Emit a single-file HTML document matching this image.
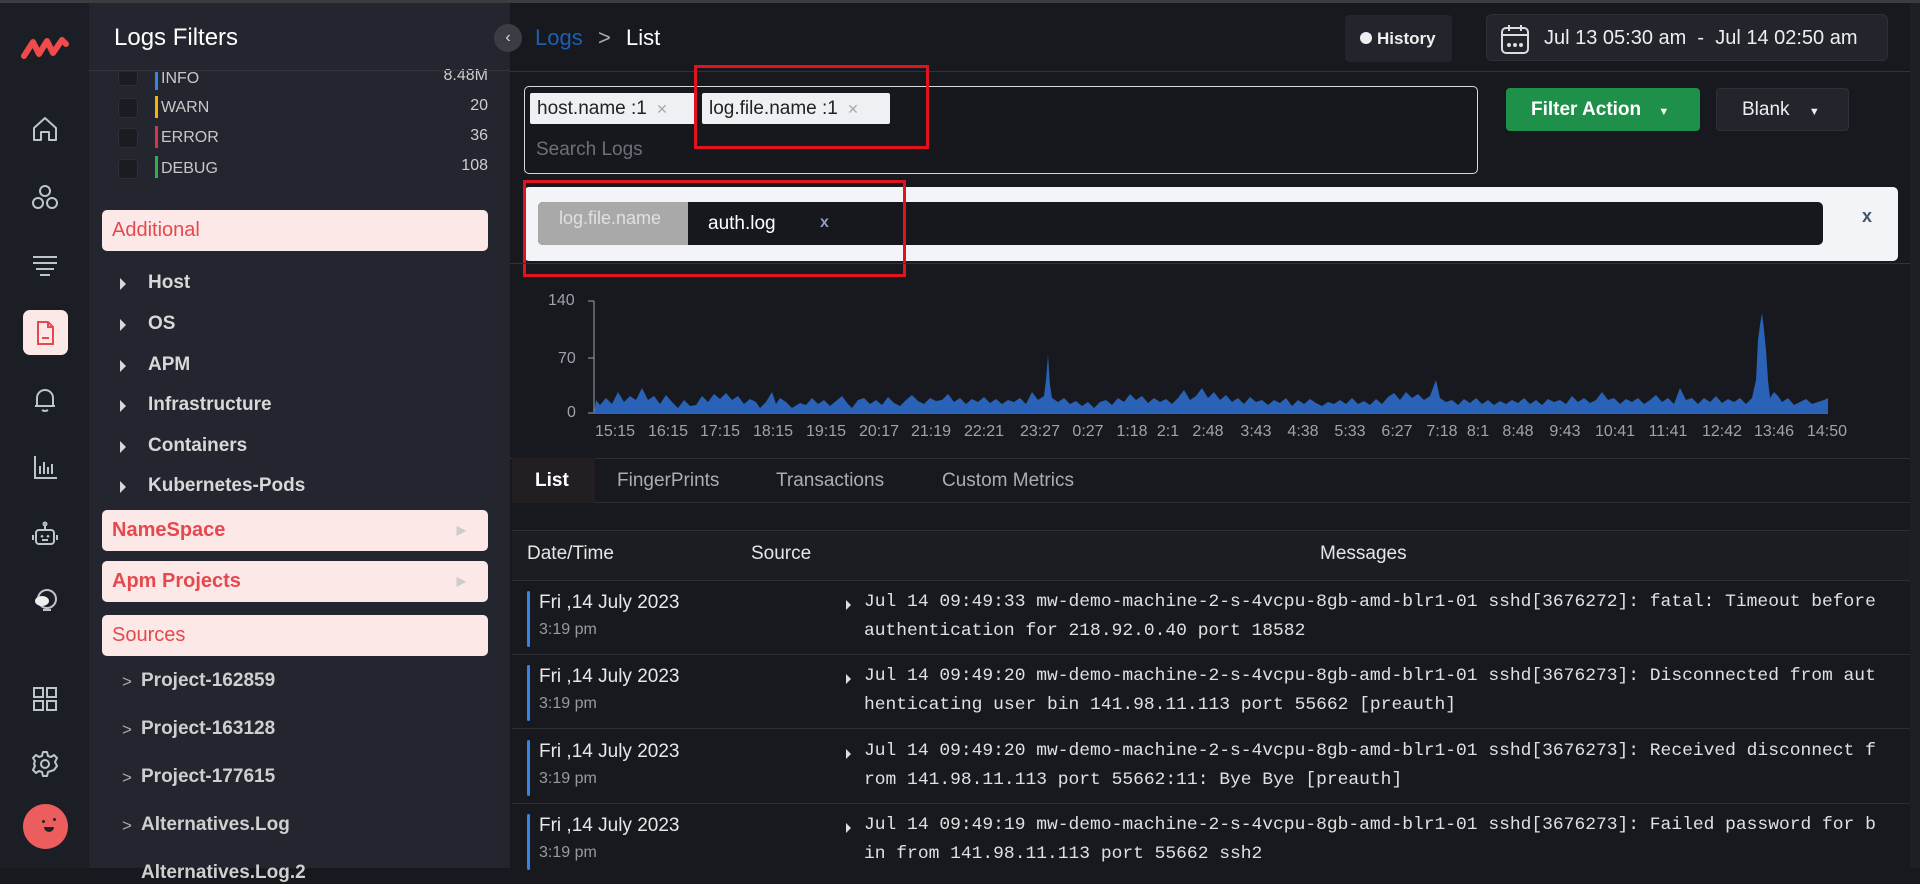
<!DOCTYPE html>
<html><head><meta charset="utf-8">
<style>
*{box-sizing:border-box;margin:0;padding:0}
body{width:1920px;height:868px;overflow:hidden;background:#17191e;font-family:"Liberation Sans",sans-serif;position:relative;color:#e6e6e6}
.a{position:absolute}
.side{left:0;top:0;width:89px;height:868px;background:#1b1e25}
.panel{left:89px;top:0;width:421px;height:868px;background:#23262e}
.main{left:510px;top:0;width:1410px;height:868px;background:#17191e}
.ic{position:absolute;left:30px;width:30px;height:30px}
.lvl{position:absolute;left:118px;width:20px;height:20px;border-radius:4px;background:#1a1c22;border:1px solid #2c2f36}
.bar{position:absolute;left:155px;width:3px;height:22px}
.lt{position:absolute;left:161px;font-size:16px;color:#c8c8c8}
.cnt{position:absolute;right:1432px;font-size:16px;color:#cfcfcf;text-align:right}
.pink{position:absolute;left:102px;width:386px;height:41px;background:#fde8e8;border-radius:5px;color:#e5484d;font-size:20px;padding-left:10px;line-height:41px}
.tri{position:absolute;left:120px;width:0;height:0;border-top:6px solid transparent;border-bottom:6px solid transparent;border-left:6px solid #d8d8d8}
.it{position:absolute;left:148px;font-size:19px;font-weight:bold;color:#d8d8d8}
.pj{position:absolute;left:141px;font-size:19px;font-weight:bold;color:#cfcfcf}
.chev{position:absolute;left:122px;font-size:17px;color:#aaa}
.xl{position:absolute;top:423px;font-size:16px;color:#9da3ad;transform:translateX(-50%)}
.dt{position:absolute;left:539px;font-size:19px;color:#e8e8e8}
.tm{position:absolute;left:539px;font-size:16px;color:#9a9a9a}
.msg{position:absolute;left:864px;font-family:"Liberation Mono",monospace;font-size:17.95px;color:#e0e0e0;white-space:pre}
.bl{position:absolute;left:527px;width:3px;height:56px;background:#3b82e6;border-radius:2px}
.sep{position:absolute;left:512px;width:1398px;height:1px;background:#2c2f36}
.rt{position:absolute;left:846px;width:0;height:0;border-top:5px solid transparent;border-bottom:5px solid transparent;border-left:5px solid #ddd}
</style></head><body>
<div class="a" style="left:0;top:0;width:1920px;height:3px;background:#3a3d40;z-index:5"></div>
<div class="a side">
 <svg class="ic" style="left:20px;top:34px;width:50px;height:26px" viewBox="0 0 50 26"><path d="M4 22 L13 8 L19 20 L27 7 L33 19 L42 6 L46 10" fill="none" stroke="#ef4b4b" stroke-width="6" stroke-linejoin="round" stroke-linecap="round"/></svg>
 <svg class="ic" style="top:114px" viewBox="0 0 30 30" fill="none" stroke="#bfc3ca" stroke-width="2"><path d="M4 14 L15 4 L26 14 V26 H19 V18 H11 V26 H4 Z" stroke-linejoin="round"/></svg>
 <svg class="ic" style="top:183px" viewBox="0 0 30 30" fill="none" stroke="#bfc3ca" stroke-width="2"><circle cx="15" cy="8" r="5"/><circle cx="8" cy="20" r="5"/><circle cx="22" cy="20" r="5"/></svg>
 <svg class="ic" style="top:250px" viewBox="0 0 30 30" fill="none" stroke="#bfc3ca" stroke-width="2"><path d="M3 7H27M3 13H27M6 19H24M10 25H20"/></svg>
 <div class="a" style="left:23px;top:310px;width:45px;height:45px;background:#fde8e8;border-radius:7px"></div>
 <svg class="ic" style="top:318px" viewBox="0 0 30 30" fill="none" stroke="#e5484d" stroke-width="2"><path d="M8 4H18L23 9V26H8Z M18 4V9H23 M12 20H19"/></svg>
 <svg class="ic" style="top:384px" viewBox="0 0 30 30" fill="none" stroke="#bfc3ca" stroke-width="2"><path d="M7 22V14A8 8 0 0 1 23 14V22H7Z M5 22H25 M12 26Q15 28 18 26"/></svg>
 <svg class="ic" style="top:452px" viewBox="0 0 30 30" fill="none" stroke="#bfc3ca" stroke-width="2"><path d="M5 4V26H27 M10 22V14M14 22V10M18 22V15M22 22V12"/></svg>
 <svg class="ic" style="top:520px" viewBox="0 0 30 30" fill="none" stroke="#bfc3ca" stroke-width="2"><rect x="6" y="10" width="18" height="14" rx="3"/><path d="M15 10V6 M3 15V20 M27 15V20 M11 17L12 16L13 17 M17 17L18 16L19 17 M12 20H18"/><circle cx="15" cy="4" r="1.5"/></svg>
 <svg class="ic" style="top:586px" viewBox="0 0 30 30"><circle cx="17" cy="13" r="9" fill="none" stroke="#bfc3ca" stroke-width="2"/><ellipse cx="12" cy="15" rx="7" ry="5" fill="#eee"/><path d="M13 24H21" stroke="#bfc3ca" stroke-width="2"/></svg>
 <svg class="ic" style="top:684px" viewBox="0 0 30 30" fill="none" stroke="#bfc3ca" stroke-width="2"><rect x="4" y="4" width="9" height="9"/><rect x="17" y="4" width="9" height="9"/><rect x="4" y="17" width="9" height="9"/><rect x="17" y="17" width="9" height="9"/></svg>
 <svg class="ic" style="top:749px" viewBox="0 0 30 30" fill="none" stroke="#bfc3ca" stroke-width="2"><circle cx="15" cy="15" r="4"/><path d="M13 3H17L18 7L21 8L24 6L27 9L25 13L26 15L27 17L24 21L21 22L18 23L17 27H13L12 23L9 22L6 24L3 21L5 17L4 15L5 12L3 9L6 6L9 8L12 7Z" stroke-linejoin="round"/></svg>
 <div class="a" style="left:23px;top:804px;width:45px;height:45px;border-radius:50%;background:#ec5d5d"></div>
 <div class="a" style="left:42px;top:820px;width:3px;height:3px;background:#222;border-radius:50%"></div>
 <div class="a" style="left:53px;top:818px;width:3px;height:3px;background:#222;border-radius:50%"></div>
 <div class="a" style="left:44px;top:827px;width:10px;height:5px;background:#222;border-radius:0 0 6px 6px"></div>
</div>
<div class="a panel">
 <div class="a" style="left:25px;top:24px;font-size:24px;font-weight:500;color:#fff">Logs Filters</div>
</div>
<div class="lvl" style="top:72px;height:14px;border-top:none;border-radius:0 0 4px 4px"></div><div class="bar" style="top:72px;height:18px;background:#3b82e6"></div><div class="lt" style="top:70px">INFO</div><div class="cnt" style="top:67px">8.48M</div>
<div class="lvl" style="top:98px"></div><div class="bar" style="top:96px;background:#f5b400"></div><div class="lt" style="top:99px">WARN</div><div class="cnt" style="top:97px">20</div>
<div class="lvl" style="top:128px"></div><div class="bar" style="top:126px;background:#d9344a"></div><div class="lt" style="top:129px">ERROR</div><div class="cnt" style="top:127px">36</div>
<div class="lvl" style="top:159px"></div><div class="bar" style="top:156px;background:#2fb04f"></div><div class="lt" style="top:160px">DEBUG</div><div class="cnt" style="top:157px">108</div>
<div class="a" style="left:89px;top:70px;width:421px;height:1px;background:#33363d"></div>
<div class="pink" style="top:210px">Additional</div>
<div class="tri" style="top:278px"></div><div class="it" style="top:272px">Host</div>
<div class="tri" style="top:319px"></div><div class="it" style="top:313px">OS</div>
<div class="tri" style="top:360px"></div><div class="it" style="top:354px">APM</div>
<div class="tri" style="top:400px"></div><div class="it" style="top:394px">Infrastructure</div>
<div class="tri" style="top:441px"></div><div class="it" style="top:435px">Containers</div>
<div class="tri" style="top:481px"></div><div class="it" style="top:475px">Kubernetes-Pods</div>
<div class="pink" style="top:510px;font-weight:bold">NameSpace<span style="position:absolute;right:22px;color:#ccc;font-size:12px">&#9654;</span></div>
<div class="pink" style="top:561px;font-weight:bold">Apm Projects<span style="position:absolute;right:22px;color:#ccc;font-size:12px">&#9654;</span></div>
<div class="pink" style="top:615px">Sources</div>
<div class="chev" style="top:672px">&gt;</div><div class="pj" style="top:670px">Project-162859</div>
<div class="chev" style="top:720px">&gt;</div><div class="pj" style="top:718px">Project-163128</div>
<div class="chev" style="top:768px">&gt;</div><div class="pj" style="top:766px">Project-177615</div>
<div class="chev" style="top:816px">&gt;</div><div class="pj" style="top:814px">Alternatives.Log</div>
<div class="pj" style="top:862px">Alternatives.Log.2</div>

<div class="a main"></div>
<div class="a" style="left:1910px;top:0;width:10px;height:868px;background:#1d1f24"></div>
<div class="a" style="left:494px;top:24px;width:28px;height:28px;border-radius:50%;background:#3a3d44;color:#ddd;font-size:16px;text-align:center;line-height:27px">&#8249;</div>
<div class="a" style="left:535px;top:25px;font-size:22px;color:#1f5fb0">Logs</div>
<div class="a" style="left:598px;top:25px;font-size:22px;color:#aaa">&gt;</div>
<div class="a" style="left:626px;top:25px;font-size:22px;color:#fff">List</div>
<div class="a" style="left:1345px;top:15px;width:107px;height:47px;background:#22252b;border-radius:4px;font-size:17px;font-weight:bold;color:#eee;line-height:47px;padding-left:15px"><span style="display:inline-block;width:12px;height:12px;border-radius:50%;background:#eee;margin-right:5px"></span>History</div>
<div class="a" style="left:1486px;top:14px;width:402px;height:47px;background:#22252b;border-radius:6px;border:1px solid #2d3037"></div>
<svg class="a" style="left:1500px;top:23px" width="30" height="32" viewBox="0 0 30 32" fill="none" stroke="#ddd" stroke-width="2"><rect x="2" y="5" width="26" height="25" rx="4"/><path d="M2 12H28M9 2V8M21 2V8"/><circle cx="9" cy="22" r="1" fill="#ddd"/><circle cx="15" cy="22" r="1" fill="#ddd"/><circle cx="21" cy="22" r="1" fill="#ddd"/></svg>
<div class="a" style="left:1544px;top:27px;font-size:20px;color:#eee;white-space:pre">Jul 13 05:30 am  -  Jul 14 02:50 am</div>
<div class="a" style="left:510px;top:71px;width:1400px;height:1px;background:#30333a"></div>

<div class="a" style="left:524px;top:86px;width:954px;height:88px;border:1px solid #d8d8d8;border-radius:5px;background:#16181d"></div>
<div class="a" style="left:530px;top:93px;width:165px;height:31px;background:#eef0f4;border-radius:2px;font-size:19px;color:#222;line-height:31px;padding-left:7px">host.name :1 <span style="color:#aaa;font-size:14px;margin-left:4px">✕</span></div>
<div class="a" style="left:702px;top:93px;width:188px;height:31px;background:#eef0f4;border-radius:2px;font-size:19px;color:#222;line-height:31px;padding-left:7px">log.file.name :1 <span style="color:#aaa;font-size:14px;margin-left:4px">✕</span></div>
<div class="a" style="left:536px;top:139px;font-size:19px;color:#6d7078">Search Logs</div>
<div class="a" style="left:694px;top:65px;width:235px;height:84px;border:3px solid #e0141e"></div>
<div class="a" style="left:1506px;top:88px;width:194px;height:43px;background:#1f9049;border-radius:4px;font-size:19px;font-weight:bold;color:#fff;line-height:43px;padding-left:25px">Filter Action <span style="font-size:11px;margin-left:12px">&#9660;</span></div>
<div class="a" style="left:1716px;top:88px;width:133px;height:43px;background:#22252b;border-radius:4px;border:1px solid #2d3037;font-size:19px;color:#eee;line-height:41px;padding-left:25px">Blank <span style="font-size:11px;margin-left:14px">&#9660;</span></div>

<div class="a" style="left:524px;top:187px;width:1374px;height:74px;background:#f2f4f7;border-radius:5px"></div>
<div class="a" style="left:538px;top:202px;width:1285px;height:43px;background:#16181d;border-radius:5px"></div>
<div class="a" style="left:538px;top:202px;width:150px;height:43px;background:#a9a9a9;border-radius:5px 0 0 5px;color:#e0e0e0;font-size:18px;padding:6px 0 0 21px">log.file.name</div>
<div class="a" style="left:708px;top:213px;font-size:19px;color:#fff">auth.log</div>
<div class="a" style="left:820px;top:214px;font-size:16px;color:#8aa0c0;font-weight:bold">x</div>
<div class="a" style="left:1862px;top:206px;font-size:18px;color:#456;font-weight:bold">x</div>
<div class="a" style="left:523px;top:180px;width:383px;height:97px;border:3px solid #e0141e"></div>
<div class="a" style="left:510px;top:263px;width:1400px;height:1px;background:#30333a"></div>

<div class="a" style="left:548px;top:292px;font-size:16px;color:#9da3ad">140</div>
<div class="a" style="left:558px;top:350px;font-size:16px;color:#9da3ad">70</div>
<div class="a" style="left:567px;top:404px;font-size:16px;color:#9da3ad">0</div>
<svg class="a" style="left:0;top:0" width="1920" height="440">
<path d="M594 301V413H1828M588 301H594M588 358H594M588 413H594" stroke="#9da3ad" stroke-width="1" fill="none"/>
<polygon fill="#2a62b8" points="594,413 596,400 600,405 606,398 612,404 618,392 624,402 630,396 636,400 642,388 648,400 654,396 660,404 666,395 672,402 678,408 684,400 690,406 696,405 702,396 708,402 714,394 720,399 726,393 732,400 738,396 744,404 750,399 756,402 760,408 766,402 772,392 776,404 780,398 786,402 792,408 800,403 806,405 812,398 818,404 824,400 830,406 836,401 842,396 848,404 852,408 858,400 864,398 870,404 876,400 882,405 888,397 894,403 900,406 906,400 912,395 918,401 924,404 930,398 936,401 942,400 948,394 954,402 960,398 966,404 972,399 978,402 984,397 990,403 996,399 1002,404 1008,400 1014,402 1020,398 1026,404 1032,392 1038,400 1044,396 1046,380 1048,355 1050,385 1052,398 1058,402 1064,398 1070,404 1076,401 1082,406 1088,402 1094,408 1100,402 1106,400 1112,405 1118,398 1124,402 1130,394 1136,400 1142,396 1148,403 1154,398 1160,402 1166,399 1172,404 1178,398 1184,390 1190,400 1196,396 1202,388 1208,398 1214,392 1220,400 1226,395 1232,402 1238,398 1244,404 1250,397 1256,402 1262,400 1268,405 1274,400 1280,403 1286,398 1292,406 1298,400 1304,404 1310,399 1316,403 1322,406 1328,402 1334,404 1340,400 1346,404 1352,398 1358,404 1364,401 1370,405 1376,399 1382,404 1388,397 1394,393 1400,400 1406,392 1412,398 1418,394 1424,400 1430,396 1436,380 1440,398 1446,402 1452,400 1458,405 1464,399 1470,403 1476,398 1482,404 1488,400 1494,405 1500,401 1506,404 1512,400 1518,403 1524,398 1530,404 1536,400 1542,405 1548,399 1554,402 1560,400 1566,404 1572,396 1578,402 1584,398 1590,403 1596,400 1602,392 1608,400 1614,398 1620,404 1626,399 1632,402 1638,398 1644,404 1650,400 1656,395 1662,402 1668,398 1674,404 1680,388 1686,400 1692,398 1698,404 1704,398 1710,402 1716,396 1722,403 1728,399 1734,402 1740,398 1746,404 1752,398 1756,380 1758,340 1760,325 1762,313 1764,330 1766,350 1768,380 1770,398 1774,392 1778,396 1782,402 1788,398 1794,405 1800,402 1806,399 1812,404 1818,402 1824,400 1828,398 1828,413"/>
</svg>
<div class="xl" style="left:615px">15:15</div><div class="xl" style="left:668px">16:15</div><div class="xl" style="left:720px">17:15</div><div class="xl" style="left:773px">18:15</div><div class="xl" style="left:826px">19:15</div><div class="xl" style="left:879px">20:17</div><div class="xl" style="left:931px">21:19</div><div class="xl" style="left:984px">22:21</div><div class="xl" style="left:1040px">23:27</div><div class="xl" style="left:1088px">0:27</div><div class="xl" style="left:1132px">1:18</div><div class="xl" style="left:1168px">2:1</div><div class="xl" style="left:1208px">2:48</div><div class="xl" style="left:1256px">3:43</div><div class="xl" style="left:1303px">4:38</div><div class="xl" style="left:1350px">5:33</div><div class="xl" style="left:1397px">6:27</div><div class="xl" style="left:1442px">7:18</div><div class="xl" style="left:1478px">8:1</div><div class="xl" style="left:1518px">8:48</div><div class="xl" style="left:1565px">9:43</div><div class="xl" style="left:1615px">10:41</div><div class="xl" style="left:1668px">11:41</div><div class="xl" style="left:1722px">12:42</div><div class="xl" style="left:1774px">13:46</div><div class="xl" style="left:1827px">14:50</div>

<div class="a" style="left:510px;top:458px;width:1400px;height:1px;background:#2c2f36"></div>
<div class="a" style="left:595px;top:502px;width:1315px;height:1px;background:#2c2f36"></div>
<div class="a" style="left:512px;top:458px;width:83px;height:45px;background:#221e22"></div>
<div class="a" style="left:535px;top:470px;font-size:19px;font-weight:bold;color:#fff">List</div>
<div class="a" style="left:617px;top:470px;font-size:19px;color:#a9adb5">FingerPrints</div>
<div class="a" style="left:776px;top:470px;font-size:19px;color:#a9adb5">Transactions</div>
<div class="a" style="left:942px;top:470px;font-size:19px;color:#a9adb5">Custom Metrics</div>

<div class="a" style="left:512px;top:530px;width:1398px;height:50px;background:#1b1d22;border-top:1px solid #2c2f36"></div>
<div class="a" style="left:527px;top:543px;font-size:19px;color:#e6e6e6">Date/Time</div>
<div class="a" style="left:751px;top:543px;font-size:19px;color:#e6e6e6">Source</div>
<div class="a" style="left:1320px;top:543px;font-size:19px;color:#e6e6e6">Messages</div>

<div class="sep" style="top:580px"></div>
<div class="bl" style="top:591px"></div><div class="dt" style="top:592px">Fri ,14 July 2023</div><div class="tm" style="top:621px">3:19 pm</div>
<div class="rt" style="top:600px"></div><div class="msg" style="top:592px">Jul 14 09:49:33 mw-demo-machine-2-s-4vcpu-8gb-amd-blr1-01 sshd[3676272]: fatal: Timeout before</div><div class="msg" style="top:621px">authentication for 218.92.0.40 port 18582</div>
<div class="sep" style="top:654px"></div>
<div class="bl" style="top:665px"></div><div class="dt" style="top:666px">Fri ,14 July 2023</div><div class="tm" style="top:695px">3:19 pm</div>
<div class="rt" style="top:674px"></div><div class="msg" style="top:666px">Jul 14 09:49:20 mw-demo-machine-2-s-4vcpu-8gb-amd-blr1-01 sshd[3676273]: Disconnected from aut</div><div class="msg" style="top:695px">henticating user bin 141.98.11.113 port 55662 [preauth]</div>
<div class="sep" style="top:728px"></div>
<div class="bl" style="top:740px"></div><div class="dt" style="top:741px">Fri ,14 July 2023</div><div class="tm" style="top:770px">3:19 pm</div>
<div class="rt" style="top:749px"></div><div class="msg" style="top:741px">Jul 14 09:49:20 mw-demo-machine-2-s-4vcpu-8gb-amd-blr1-01 sshd[3676273]: Received disconnect f</div><div class="msg" style="top:770px">rom 141.98.11.113 port 55662:11: Bye Bye [preauth]</div>
<div class="sep" style="top:803px"></div>
<div class="bl" style="top:814px"></div><div class="dt" style="top:815px">Fri ,14 July 2023</div><div class="tm" style="top:844px">3:19 pm</div>
<div class="rt" style="top:823px"></div><div class="msg" style="top:815px">Jul 14 09:49:19 mw-demo-machine-2-s-4vcpu-8gb-amd-blr1-01 sshd[3676273]: Failed password for b</div><div class="msg" style="top:844px">in from 141.98.11.113 port 55662 ssh2</div>
</body></html>
